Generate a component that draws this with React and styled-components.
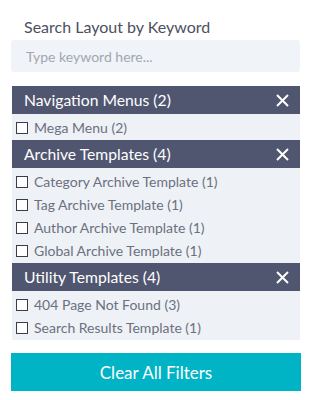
import React from "react"
import styled, { createGlobalStyle } from "styled-components"

const GlobalStyle = createGlobalStyle`
  body {
    margin: 0;
    background: #ffffff;
    font-family: Lato, "Noto Sans", sans-serif;
  }
`

const Sidebar = styled.div`
  width: 290px;
  padding: 17px 0 0 11px;
  display: flex;
  flex-direction: column;
`

const Title = styled.h3`
  margin: 0 0 4px 13px;
  font-size: 16px;
  font-weight: 400;
  line-height: 19px;
  color: #4b5062;
`

const SearchInput = styled.input`
  box-sizing: border-box;
  width: 289px;
  height: 32px;
  border: none;
  border-radius: 3px;
  background: #f0f3f8;
  padding: 0 15px;
  font-family: inherit;
  font-size: 14px;
  color: #4b5062;
  outline: none;
  &::placeholder {
    color: #a2a6b0;
  }
`

const Groups = styled.div`
  margin-top: 14px;
  margin-left: 1px;
  width: 288px;
  display: flex;
  flex-direction: column;
`

const GroupHeader = styled.div`
  height: 28px;
  background: #50566f;
  color: #ffffff;
  display: flex;
  align-items: center;
  justify-content: space-between;
  padding: 0 11px 0 12px;
  font-size: 15.7px;
`

const CloseButton = styled.button`
  border: none;
  background: none;
  padding: 0;
  display: flex;
  color: #ffffff;
  cursor: pointer;
`

const ItemList = styled.ul`
  list-style: none;
  margin: 0;
  padding: 2px 0 1px;
  background: #eef2f7;
`

const Item = styled.li`
  height: 23px;
  display: flex;
  align-items: center;
  padding-left: 4px;
  font-size: 14px;
  color: #6c707e;
`

const Box = styled.span`
  box-sizing: border-box;
  width: 12px;
  height: 12px;
  border: 1px solid #3a3d48;
  background: #ffffff;
  margin-right: 6px;
  flex-shrink: 0;
`

const ClearButton = styled.button`
  margin-top: 13px;
  width: 290px;
  height: 38px;
  border: none;
  background: #00b4c5;
  color: #ffffff;
  font-family: inherit;
  font-size: 17px;
  cursor: pointer;
`

const groups = [
  { name: "Navigation Menus", count: 2, items: [["Mega Menu", 2]] },
  {
    name: "Archive Templates",
    count: 4,
    items: [
      ["Category Archive Template", 1],
      ["Tag Archive Template", 1],
      ["Author Archive Template", 1],
      ["Global Archive Template", 1],
    ],
  },
  {
    name: "Utility Templates",
    count: 4,
    items: [
      ["404 Page Not Found", 3],
      ["Search Results Template", 1],
    ],
  },
]

function CloseIcon() {
  return (
    <svg width="13" height="13" viewBox="0 0 13 13">
      <path d="M1 1L12 12M12 1L1 12" stroke="currentColor" strokeWidth="2" />
    </svg>
  )
}

export default function App() {
  return (
    <>
      <GlobalStyle />
      <Sidebar>
        <Title>Search Layout by Keyword</Title>
        <SearchInput placeholder="Type keyword here..." />
        <Groups>
          {groups.map((g) => (
            <div key={g.name}>
              <GroupHeader>
                <span>
                  {g.name} ({g.count})
                </span>
                <CloseButton>
                  <CloseIcon />
                </CloseButton>
              </GroupHeader>
              <ItemList>
                {g.items.map(([label, n]) => (
                  <Item key={label}>
                    <Box />
                    {label} ({n})
                  </Item>
                ))}
              </ItemList>
            </div>
          ))}
        </Groups>
        <ClearButton>Clear All Filters</ClearButton>
      </Sidebar>
    </>
  )
}
